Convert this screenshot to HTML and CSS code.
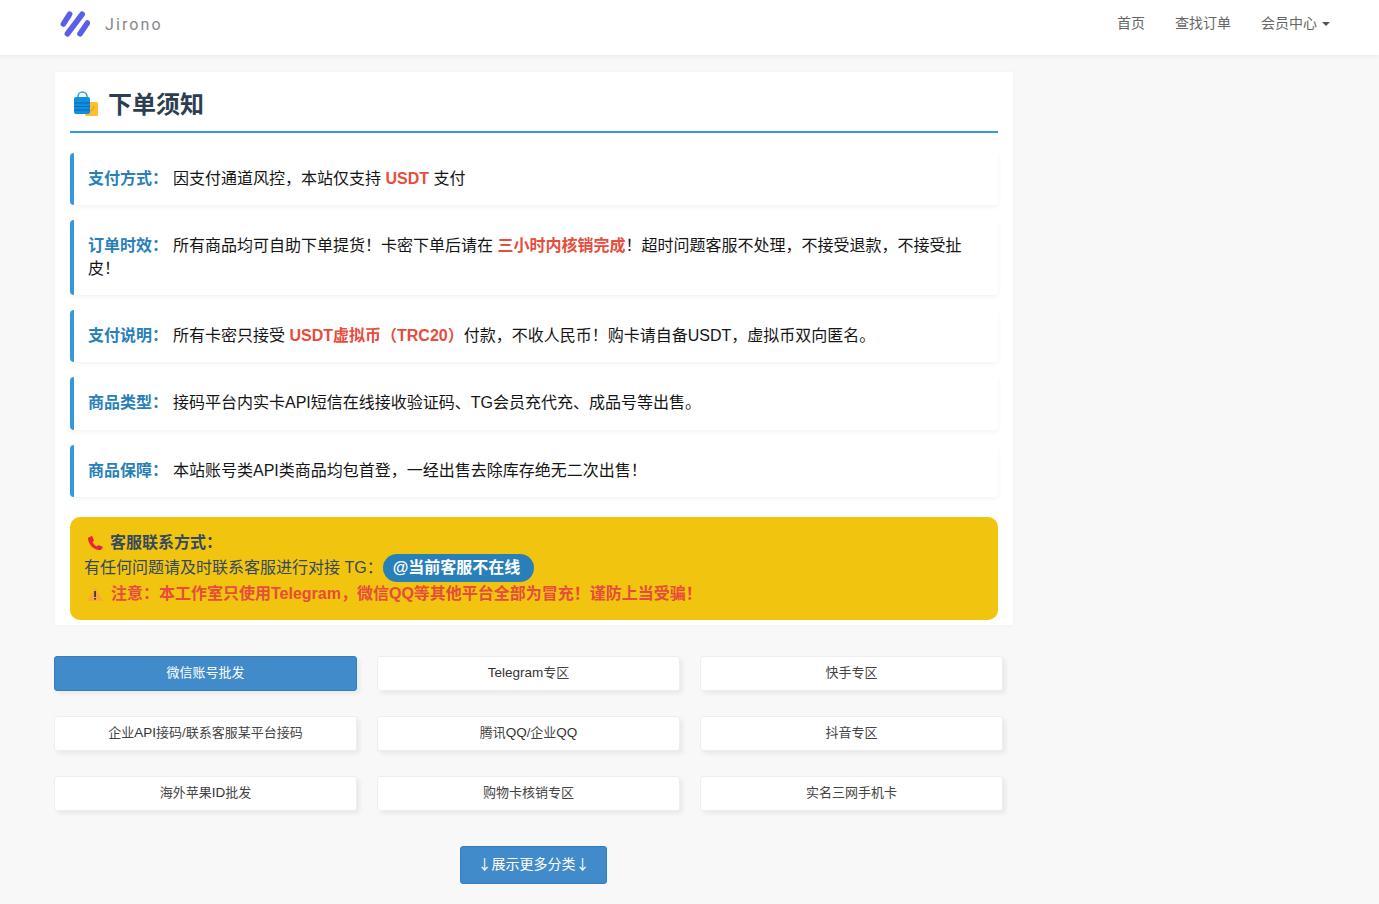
FILE: index.html
```html
<!DOCTYPE html>
<html lang="zh">
<head>
<meta charset="utf-8">
<title>下单须知</title>
<link rel="stylesheet" href="styles.css">
</head>
<body>
<nav class="navbar">
  <a class="brand">
    <svg class="logo" viewBox="0 0 30 26" width="30" height="26"><g stroke="#5b5ee8" stroke-width="5.6" stroke-linecap="round"><path d="M3.4 13 L9.6 3.2"/><path d="M7.4 22.8 L22.2 3.2"/><path d="M20 22.8 L27.4 12"/></g></svg>
    <span class="brand-name">Jirono</span>
  </a>
  <ul class="nav-links">
    <li>首页</li>
    <li>查找订单</li>
    <li>会员中心<i class="caret"></i></li>
  </ul>
</nav>
<main class="wrap">
  <section class="card">
    <h2 class="title">
      <svg class="bag" viewBox="0 0 26 26" width="26" height="26">
        <rect x="12" y="11" width="13" height="14" rx="1.5" fill="#fbc02d"/>
        <path d="M15 20 q5 1 6 -5" stroke="#ef8f1a" stroke-width="1" fill="none"/>
        <path d="M5 7 V5.5 a4.5 4.5 0 0 1 9 0 V7" stroke="#29a3e0" stroke-width="1.6" fill="none"/>
        <rect x="1" y="6" width="16" height="17" rx="2" fill="#0f8fdc"/>
        <path d="M1 12h16M1 15.5h16M1 19h16" stroke="#0869b5" stroke-width="1.2"/>
      </svg>
      <span>下单须知</span>
    </h2>
    <div class="notice"><b class="label">支付方式：</b>因支付通道风控，本站仅支持 <b class="red">USDT</b> 支付</div>
    <div class="notice"><b class="label">订单时效：</b>所有商品均可自助下单提货！卡密下单后请在 <b class="red">三小时内核销完成</b>！超时问题客服不处理，不接受退款，不接受扯皮！</div>
    <div class="notice"><b class="label">支付说明：</b>所有卡密只接受 <b class="red">USDT虚拟币（TRC20）</b>付款，不收人民币！购卡请自备USDT，虚拟币双向匿名。</div>
    <div class="notice"><b class="label">商品类型：</b>接码平台内实卡API短信在线接收验证码、TG会员充代充、成品号等出售。</div>
    <div class="notice"><b class="label">商品保障：</b>本站账号类API类商品均包首登，一经出售去除库存绝无二次出售！</div>
    <div class="contact">
      <div class="contact-title">
        <svg class="phone" viewBox="0 0 18 18" width="18" height="18">
          <defs><linearGradient id="phoneGrad" x1="0" y1="0" x2="1" y2="1"><stop offset="0" stop-color="#e8262c"/><stop offset="0.7" stop-color="#e8263c"/><stop offset="1" stop-color="#b8267e"/></linearGradient></defs>
          <path d="M2 4 L6 1.8 L8 6.5 L6.5 8 C7.5 10 9 11.5 11 12.5 L12.5 11 L17 13 L15 16 C8 17 2 10 2 4 Z" fill="url(#phoneGrad)"/>
        </svg>
        <b>客服联系方式：</b>
      </div>
      <div class="contact-line">有任何问题请及时联系客服进行对接 TG：<a class="pill">@当前客服不在线</a></div>
      <div class="warn">
        <svg class="warn-icon" viewBox="0 0 18 18" width="18" height="18"><path d="M9 2 L17 16 H1 Z" fill="#f9a93a"/><rect x="8.3" y="6" width="1.5" height="6" fill="#222"/><rect x="8.3" y="13" width="1.5" height="1.6" fill="#222"/></svg>
        <b>注意：本工作室只使用Telegram，微信QQ等其他平台全部为冒充！谨防上当受骗！</b>
      </div>
    </div>
  </section>
  <div class="cats">
    <a class="cat active">微信账号批发</a>
    <a class="cat"><span class="lat">Telegram</span>专区</a>
    <a class="cat">快手专区</a>
    <a class="cat">企业<span class="lat">API</span>接码/联系客服某平台接码</a>
    <a class="cat">腾讯<span class="lat">QQ</span>/企业<span class="lat">QQ</span></a>
    <a class="cat">抖音专区</a>
    <a class="cat">海外苹果<span class="lat">ID</span>批发</a>
    <a class="cat">购物卡核销专区</a>
    <a class="cat">实名三网手机卡</a>
  </div>
  <div class="more-row"><a class="more"><span class="arrow">↓</span>展示更多分类<span class="arrow">↓</span></a></div>
</main>
</body>
</html>
```

FILE: styles.css
```css
* { box-sizing: border-box; }
html, body { margin: 0; padding: 0; }
body {
  background: #f8f8f8;
  font-family: "Liberation Sans", "Noto Sans CJK SC", sans-serif;
  font-size: 14px;
  color: #333;
  height: 904px;
  overflow: hidden;
}
.navbar {
  height: 55px;
  background: #fff;
  box-shadow: 0 1px 6px rgba(0,0,0,.07);
  display: flex;
  justify-content: space-between;
  padding: 0 48px 12px 60px;
  align-items: center;
}
.brand { display: flex; align-items: center; gap: 15px; padding-top: 8px; margin-top: -4px; }
.logo { display: block; }
.brand-name {
  font-family: Roboto, sans-serif;
  font-size: 16px;
  letter-spacing: 2.1px;
  color: #85878f;
  padding-top: 2px;
}
.nav-links {
  list-style: none;
  display: flex;
  gap: 30px;
  margin: 0;
  padding: 0;
  color: #666;
  font-size: 14px;
}
.caret {
  display: inline-block;
  margin-left: 5px;
  vertical-align: middle;
  border-top: 4px solid #555;
  border-left: 4px solid transparent;
  border-right: 4px solid transparent;
}
.nav-links li:last-child { margin-right: 1px; }
.wrap { width: 958px; margin: 17px 0 0 55px; }
.card {
  background: #fff;
  height: 553px;
  padding: 15px;
  box-shadow: 0 0 3px rgba(0,0,0,.04);
}
.title {
  margin: 0 0 19.8px;
  height: 46px;
  border-bottom: 2px solid #3498db;
  display: flex;
  align-items: flex-start;
  gap: 9px;
  padding-left: 3px;
  font-size: 24px;
  line-height: 36px;
  font-weight: 700;
  color: #2c3e50;
}
.bag { margin-top: 4px; }
.notice {
  border-left: 4px solid #3498db;
  border-radius: 4px;
  background: #fff;
  box-shadow: 0 2px 5px rgba(0,0,0,.05);
  padding: 15px 14px;
  margin-bottom: 15px;
  font-size: 16px;
  line-height: 22.4px;
  color: #151515;
}
.label { color: #2980b9; margin-right: 5px; }
.red { color: #e74c3c; }
.contact {
  margin-top: 20px;
  background: #f1c40f;
  border-radius: 10px;
  height: 103px;
  padding: 14px 15px;
  color: #34495e;
  font-size: 16px;
  line-height: 24px;
}
.contact-title { display: flex; align-items: center; gap: 6px; height: 24px; padding-left: 1px; }
.contact-line { height: 26px; display: flex; align-items: center; margin-left: -1px; }
.pill {
  background: #2980b9;
  color: #fff;
  font-weight: 700;
  line-height: 28px;
  padding: 0 14px 0 10px;
  border-radius: 14px;
}
.warn { display: flex; align-items: center; gap: 7px; height: 26px; color: #e74c3c; padding-left: 1px; }
.cats {
  display: grid;
  grid-template-columns: repeat(3, 303px);
  column-gap: 20px;
  row-gap: 25px;
  margin: 31px 0 0 -1px;
  width: 949px;
}
.cat {
  height: 35px;
  background: #fff;
  border: 1px solid #eee;
  border-radius: 3px;
  box-shadow: 3px 3px 4px rgba(0,0,0,.06);
  text-align: center;
  font-size: 13px;
  line-height: 32px;
  color: #444;
}
.lat { font-size: 13.5px; color: #333; }
.cat.active {
  background: #428bca;
  border-color: #357ebd;
  color: #fff;
}
.more-row { display: flex; margin-top: 35px; padding-left: 405px; }
.more {
  width: 147px;
  height: 38px;
  background: #428bca;
  border: 1px solid #357ebd;
  border-radius: 3px;
  color: #fff;
  text-align: center;
  font-size: 14px;
  line-height: 33px;
}
.arrow { font-family: "Noto Sans CJK SC", sans-serif; font-size: 14px; }
```
